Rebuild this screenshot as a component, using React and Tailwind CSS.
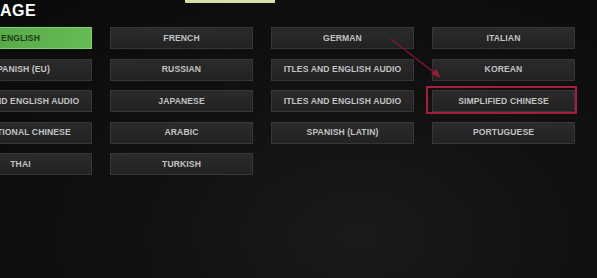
import React from "react";

const rows = [
  ["ENGLISH", "FRENCH", "GERMAN", "ITALIAN"],
  ["SPANISH (EU)", "RUSSIAN", "ITLES AND ENGLISH AUDIO", "KOREAN"],
  ["ITLES AND ENGLISH AUDIO", "JAPANESE", "ITLES AND ENGLISH AUDIO", "SIMPLIFIED CHINESE"],
  ["TRADITIONAL CHINESE", "ARABIC", "SPANISH (LATIN)", "PORTUGUESE"],
  ["THAI", "TURKISH", null, null],
];

function Btn({ label, active, highlight }) {
  if (!label) return <div />;
  return (
    <div className="relative">
      {highlight && (
        <div className="absolute left-[-6px] right-[-2px] top-[-4px] bottom-[-2px] border-2 border-[#a81d3c] rounded-[1px]" />
      )}
      <div
        className={
          active
            ? "h-[22px] flex items-center justify-center whitespace-nowrap overflow-hidden bg-gradient-to-r from-[#52a244] to-[#66bb55] border border-[#7ccf69] text-[#1c3b15] text-[8.6px] font-bold tracking-[0.1px]"
            : "h-[22px] flex items-center justify-center whitespace-nowrap overflow-hidden bg-gradient-to-b from-[#2b2b2b] to-[#222222] border border-[#363636] text-[#c2c2c2] text-[8.6px] font-bold tracking-[0.1px]"
        }
        style={{ fontFamily: '"Liberation Sans", Arial, sans-serif' }}
      >
        {label}
      </div>
    </div>
  );
}

export default function App() {
  return (
    <div
      className="relative w-[597px] h-[278px] overflow-hidden bg-[#0d0d0d] bg-[radial-gradient(ellipse_at_60%_85%,#1a1a1a_0%,#111111_45%,#0a0a0a_100%)]"
      style={{ fontFamily: '"Liberation Sans", Arial, sans-serif' }}
    >
      <div className="ml-[185px] w-[90px] h-[3px] bg-[#d9dfaa] rounded-b-[1px]" />
      <div className="text-white font-bold text-[16px] leading-[16px] tracking-[0.5px]">AGE</div>
      <div className="mt-[8px] ml-[-51px] grid grid-cols-[143px_143px_143px_143px] gap-x-[18px] gap-y-[9.5px]">
        {rows.map((r, i) =>
          r.map((label, j) => (
            <Btn
              key={i + "-" + j}
              label={label}
              active={i === 0 && j === 0}
              highlight={label === "SIMPLIFIED CHINESE"}
            />
          ))
        )}
      </div>
      <svg className="absolute left-0 top-0 pointer-events-none" width="597" height="278">
        <line x1="391" y1="39" x2="436" y2="74" stroke="#7d1830" strokeWidth="1.4" />
        <polygon points="441,78 431,74 436,69" fill="#9a1c3a" />
      </svg>
    </div>
  );
}
